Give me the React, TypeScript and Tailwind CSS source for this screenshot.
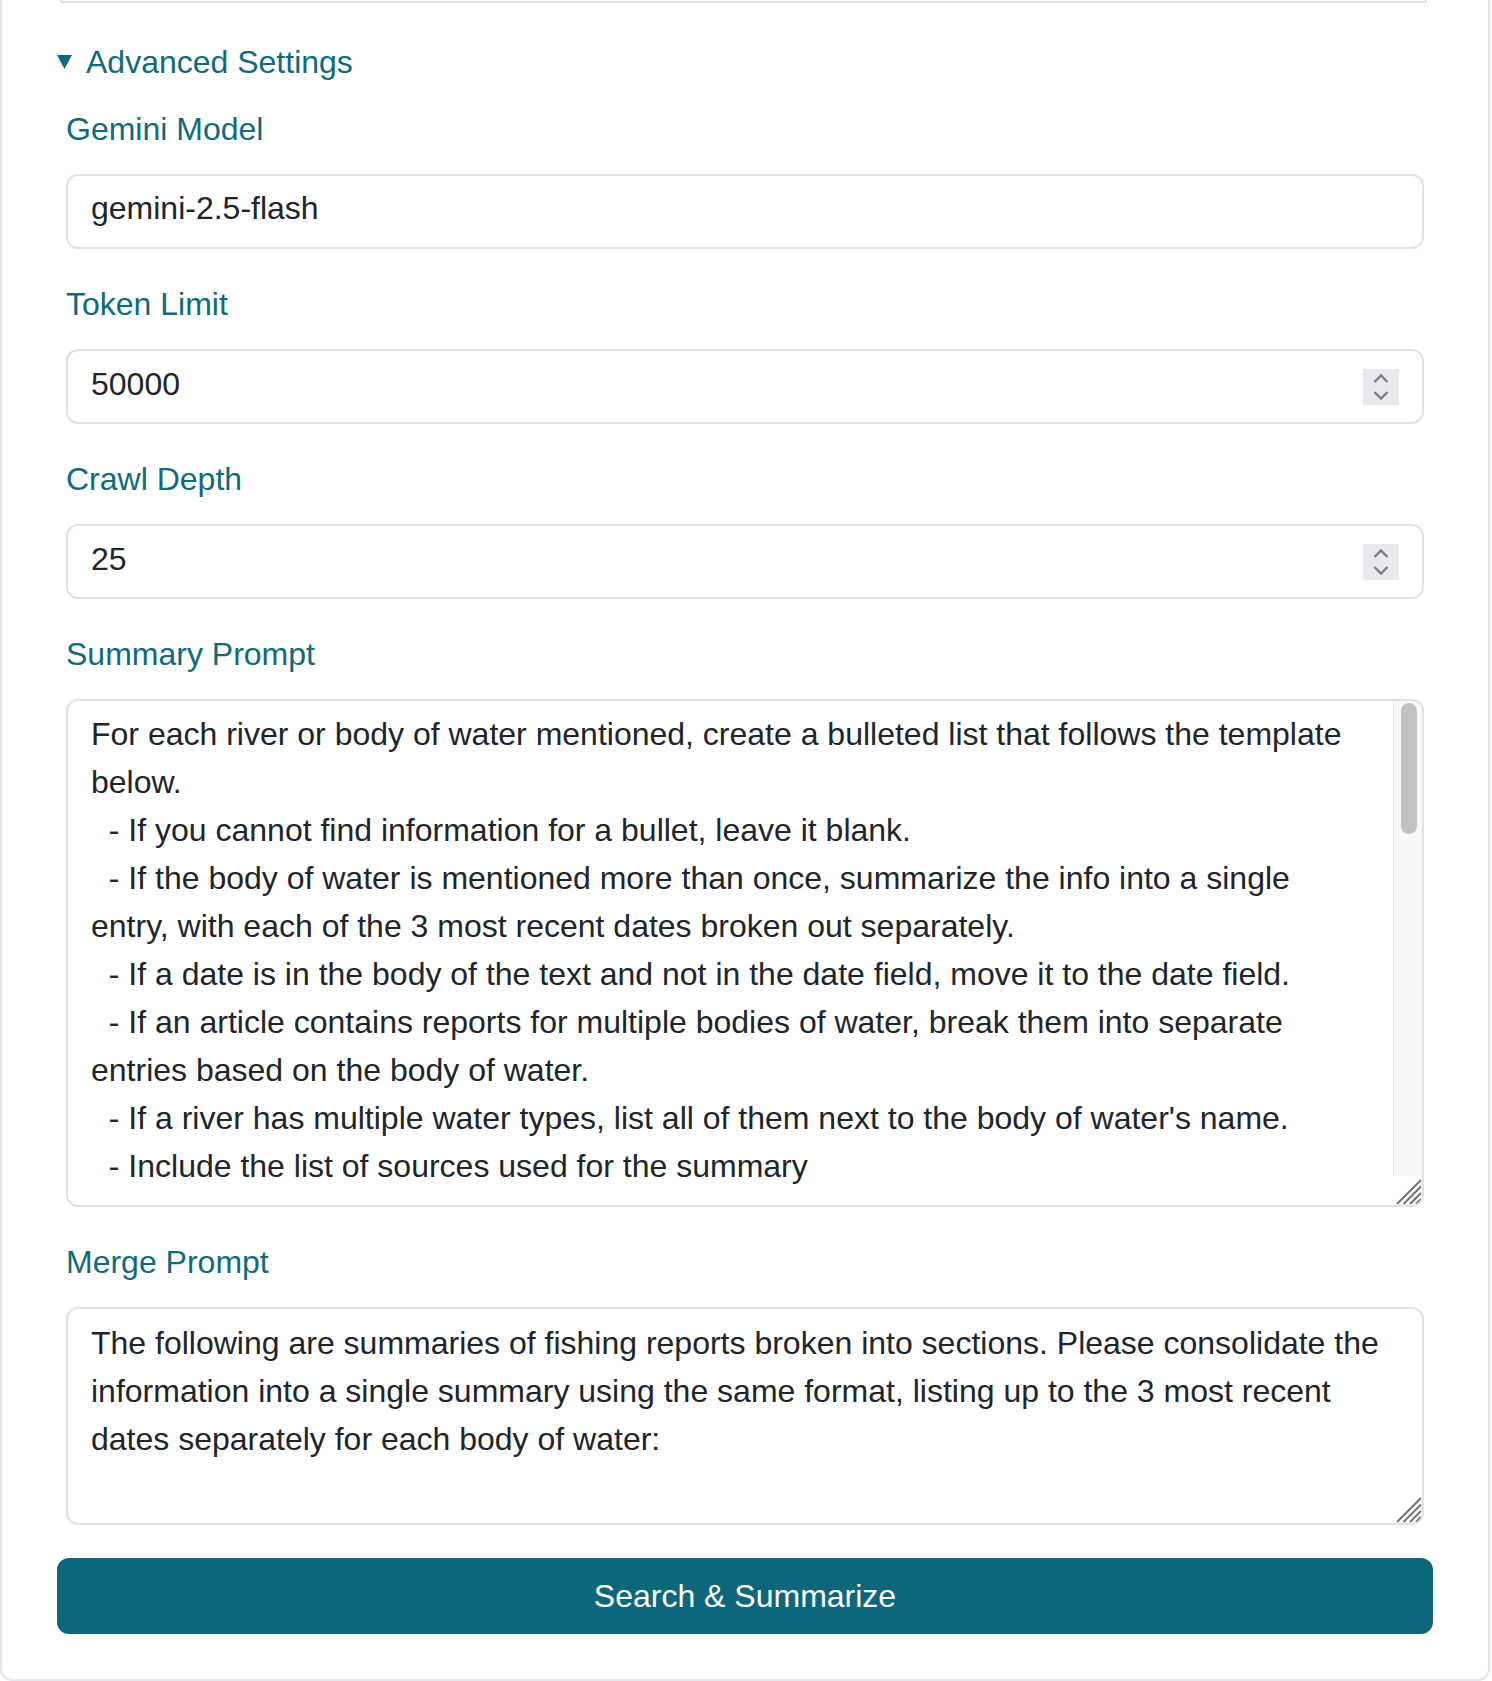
import type { ReactNode } from 'react';

const SUMMARY_PROMPT = `For each river or body of water mentioned, create a bulleted list that follows the template below.
  - If you cannot find information for a bullet, leave it blank.
  - If the body of water is mentioned more than once, summarize the info into a single entry, with each of the 3 most recent dates broken out separately.
  - If a date is in the body of the text and not in the date field, move it to the date field.
  - If an article contains reports for multiple bodies of water, break them into separate entries based on the body of water.
  - If a river has multiple water types, list all of them next to the body of water's name.
  - Include the list of sources used for the summary

Template:
**Body of Water Name** (Water Type)
  * Date:
    * Fish Species:
    * Fly Patterns:
    * Hook Sizes:
    * Colors:
    * Water Conditions:
    * Water Temperature:
    * Flow (cfs):
    * Hatches:
    * Best Time of Day:
    * Fishing Pressure:
    * Notes:
  * Date:
    * Fish Species:
    * Fly Patterns:
    * Hook Sizes:
    * Water Conditions:
    * Notes:
  * Sources:`;

const MERGE_PROMPT = `The following are summaries of fishing reports broken into sections. Please consolidate the information into a single summary using the same format, listing up to the 3 most recent dates separately for each body of water:`;

// Labels, the summary line and the button all share this teal.
const TEAL = 'text-[#0f6a7c]';

export default function App() {
  return (
    <div className="min-h-screen bg-white font-['Liberation_Sans',Arial,sans-serif] text-[32px] leading-[48px]">
      <div className="w-[1490px] rounded-b-[12px] border-2 border-t-0 border-[#e3e6ea] px-[55px] pb-[45px]">
        {/* bottom edge of the field above, scrolled off the top */}
        <div className="ml-[3px] mr-[6px] h-[3px] rounded-b-[12px] border-2 border-t-0 border-[#dde0e4]" />

        <details open className="mt-[35px]">
          <summary className={`mb-[19px] flex cursor-pointer list-none items-center gap-[14px] ${TEAL}`}>
            <svg width="15" height="14" viewBox="0 0 15 14" fill="currentColor" aria-hidden>
              <path d="M0 0h15L7.5 14z" />
            </svg>
            Advanced Settings
          </summary>

          <div className="px-[9px]">
            <Field label="Gemini Model">
              <input
                type="text"
                defaultValue="gemini-2.5-flash"
                className="h-[75px] w-full rounded-[12px] border-2 border-[#dee2e6] px-[23px] pb-[6px] text-[#212529] outline-none"
              />
            </Field>

            <Field label="Token Limit">
              <NumberBox value="50000" />
            </Field>

            <Field label="Crawl Depth">
              <NumberBox value="25" />
            </Field>

            <Field label="Summary Prompt">
              <div className="flex h-[508px] overflow-hidden rounded-[12px] border-2 border-[#dee2e6]">
                <textarea
                  defaultValue={SUMMARY_PROMPT}
                  className="min-w-0 flex-1 resize-none overflow-hidden pl-[23px] pr-[23px] pt-[9px] text-[#212529] outline-none"
                />
                <div className="flex w-[29px] shrink-0 flex-col">
                  <div className="flex-1 border-l border-[#e6e6e6] bg-[#f8f8f8] pl-[7px] pt-[2px]">
                    <div className="h-[131px] w-[16px] rounded-full bg-[#c1c1c1]" />
                  </div>
                  <div className="h-[29px] bg-white">
                    <Grip />
                  </div>
                </div>
              </div>
            </Field>

            <Field label="Merge Prompt" last>
              <div className="relative h-[218px] overflow-hidden rounded-[12px] border-2 border-[#dee2e6]">
                <textarea
                  defaultValue={MERGE_PROMPT}
                  className="h-full w-full resize-none overflow-hidden px-[23px] pt-[10px] text-[#212529] outline-none"
                />
                <div className="pointer-events-none absolute bottom-0 right-0 h-[29px] w-[29px]">
                  <Grip />
                </div>
              </div>
            </Field>
          </div>

          <button
            type="button"
            className="mt-[33px] flex h-[76px] w-full items-center justify-center rounded-[12px] bg-[#0d6679] text-white"
          >
            Search &amp; Summarize
          </button>
        </details>
      </div>
    </div>
  );
}

function Field({ label, last, children }: { label: string; last?: boolean; children: ReactNode }) {
  return (
    <div className={last ? '' : 'mb-[31px]'}>
      <label className={`mb-[21px] block ${TEAL}`}>{label}</label>
      {children}
    </div>
  );
}

function NumberBox({ value }: { value: string }) {
  return (
    <div className="flex h-[75px] items-center gap-3 rounded-[12px] border-2 border-[#dee2e6] px-[23px]">
      <input
        type="text"
        inputMode="numeric"
        defaultValue={value}
        className="min-w-0 flex-1 bg-transparent pb-[6px] text-[#212529] outline-none"
      />
      <span className="grid h-[36px] w-[36px] shrink-0 place-items-center bg-[#e9e9ed]">
        <svg width="36" height="36" viewBox="0 0 36 36" fill="none" stroke="#7c7c86" strokeWidth="2.4" aria-hidden>
          <polyline points="11.5,13 18,6.5 24.5,13" />
          <polyline points="11.5,23 18,29.5 24.5,23" />
        </svg>
      </span>
    </div>
  );
}

// Textarea resize handle: four diagonal hatch lines in the corner.
function Grip() {
  return (
    <svg width="29" height="29" viewBox="0 0 29 29" stroke="#6e6e6e" strokeWidth="1.8" aria-hidden>
      <line x1="4" y1="28" x2="28" y2="4" />
      <line x1="10.5" y1="28" x2="28" y2="10.5" />
      <line x1="17" y1="28" x2="28" y2="17" />
      <line x1="23" y1="28" x2="28" y2="23" />
    </svg>
  );
}
